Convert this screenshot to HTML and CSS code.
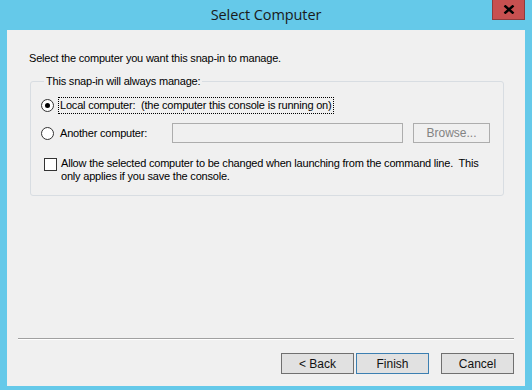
FILE: index.html
```html
<html>
  <head>
    <link rel="stylesheet" href="styles.css">
  </head>
  <body>
    <div class="window">
      <div class="titlebar">
        <span class="title">Select Computer</span>
        <div class="close">
          <svg width="12" height="9" viewBox="0 0 12 9">
            <path d="M1.5 0.5 L10.5 8.5 M10.5 0.5 L1.5 8.5" stroke="#000" stroke-width="2.4" />
          </svg>
        </div>
      </div>
      <div class="client">
        <p class="intro">Select the computer you want this snap-in to manage.</p>
        <fieldset class="group">
          <legend>This snap-in will always manage:</legend>
          <div class="option">
            <span class="radio is-checked"></span>
            <span class="label focus">Local computer:&nbsp; (the computer this console is running on)</span>
          </div>
          <div class="option">
            <span class="radio"></span>
            <span class="label wide">Another computer:</span>
            <span class="textbox"></span>
            <span class="btn is-disabled">Browse...</span>
          </div>
          <div class="check">
            <span class="checkbox"></span>
            <span class="check-text">Allow the selected computer to be changed when launching from the command line.&nbsp; This only applies if you save the console.</span>
          </div>
        </fieldset>
        <div class="footer">
          <div class="separator"></div>
          <div class="buttons">
            <span class="btn">&lt; Back</span>
            <span class="btn is-default">Finish</span>
            <span class="btn cancel">Cancel</span>
          </div>
        </div>
      </div>
    </div>
  </body>
</html>
```

FILE: styles.css
```css
:root {
  --color-frame: #65c9e9;
  --color-client: #f0f0f0;
  --color-border: #adadad;
  --color-close: #c75050;
}

* {
  box-sizing: border-box;
}

html {
  font-family: 'Liberation Sans', Arial, sans-serif;
  font-size: 11px;
  letter-spacing: -0.2px;
  color: #000;
}

body {
  margin: 0;
  width: 532px;
  height: 390px;
  background-color: var(--color-frame);
  overflow: hidden;
}

.window {
  display: flex;
  flex-direction: column;
  height: 100%;
  padding: 0 7px 4px 7px;
}

.titlebar {
  height: 30px;
  display: grid;
  grid-template-columns: 1fr auto 1fr;
  flex-shrink: 0;
}

.title {
  grid-column: 2;
  font-family: 'Open Sans', 'Liberation Sans', sans-serif;
  font-size: 14.5px;
  letter-spacing: -0.1px;
  line-height: 30px;
  color: #1a1a1a;
}

.close {
  grid-column: 3;
  justify-self: end;
  width: 33px;
  height: 20px;
  background-color: var(--color-close);
  border: 1px solid #8e3c3c;
  border-top: none;
  display: flex;
  align-items: center;
  justify-content: center;
}

.client {
  flex: 1;
  background-color: var(--color-client);
  display: flex;
  flex-direction: column;
  padding: 21px 11px 12px 11px;
}

.intro {
  margin: 0 0 0 11px;
  line-height: 14px;
}

.group {
  margin: 10px 10px 0 12px;
  padding: 7px 10px 12px 10px;
  border: 1px solid #d8dde2;
  border-radius: 3px;
  min-width: 0;
}

.group legend {
  margin-left: 3px;
  padding: 0 2px;
  line-height: 13px;
}

.option {
  display: flex;
  align-items: center;
  height: 20px;
}

.option + .option {
  margin-top: 8px;
}

.radio {
  width: 13px;
  height: 13px;
  border-radius: 50%;
  border: 1px solid #333;
  background-color: #fff;
  display: flex;
  align-items: center;
  justify-content: center;
  flex-shrink: 0;
}

.radio.is-checked::after {
  content: '';
  width: 5px;
  height: 5px;
  border-radius: 50%;
  background-color: #000;
}

.label {
  margin-left: 4px;
  padding: 1px 1px;
  line-height: 13px;
  border: 1px dotted transparent;
  white-space: nowrap;
}

.label.focus {
  border-color: #000;
}

.label.wide {
  width: 114px;
}

.textbox {
  width: 231px;
  height: 20px;
  border: 1px solid var(--color-border);
  background-color: var(--color-client);
}

.btn {
  width: 73px;
  height: 21px;
  display: flex;
  align-items: center;
  justify-content: center;
  border: 1px solid #707070;
  background-color: #e1e1e1;
  color: #111;
  font-size: 12px;
  letter-spacing: 0;
}

.btn.is-disabled {
  margin-left: 10px;
  width: 77px;
  height: 20px;
  border-color: var(--color-border);
  background-color: var(--color-client);
  color: #838383;
}

.btn.is-default {
  border-color: #3c7fb1;
}

.check {
  display: flex;
  align-items: flex-start;
  margin-top: 15px;
  padding-left: 3px;
}

.checkbox {
  width: 13px;
  height: 13px;
  border: 1px solid #333;
  background-color: #fff;
  flex-shrink: 0;
}

.check-text {
  margin-left: 4px;
  line-height: 13px;
  width: 430px;
  margin-top: -1px;
}

.footer {
  margin-top: auto;
}

.separator {
  height: 2px;
  border-top: 1px solid #a0a0a0;
  border-bottom: 1px solid #fff;
}

.buttons {
  display: flex;
  justify-content: flex-end;
  gap: 2px;
  margin-top: 13px;
}

.btn.cancel {
  margin-left: 10px;
}
```
